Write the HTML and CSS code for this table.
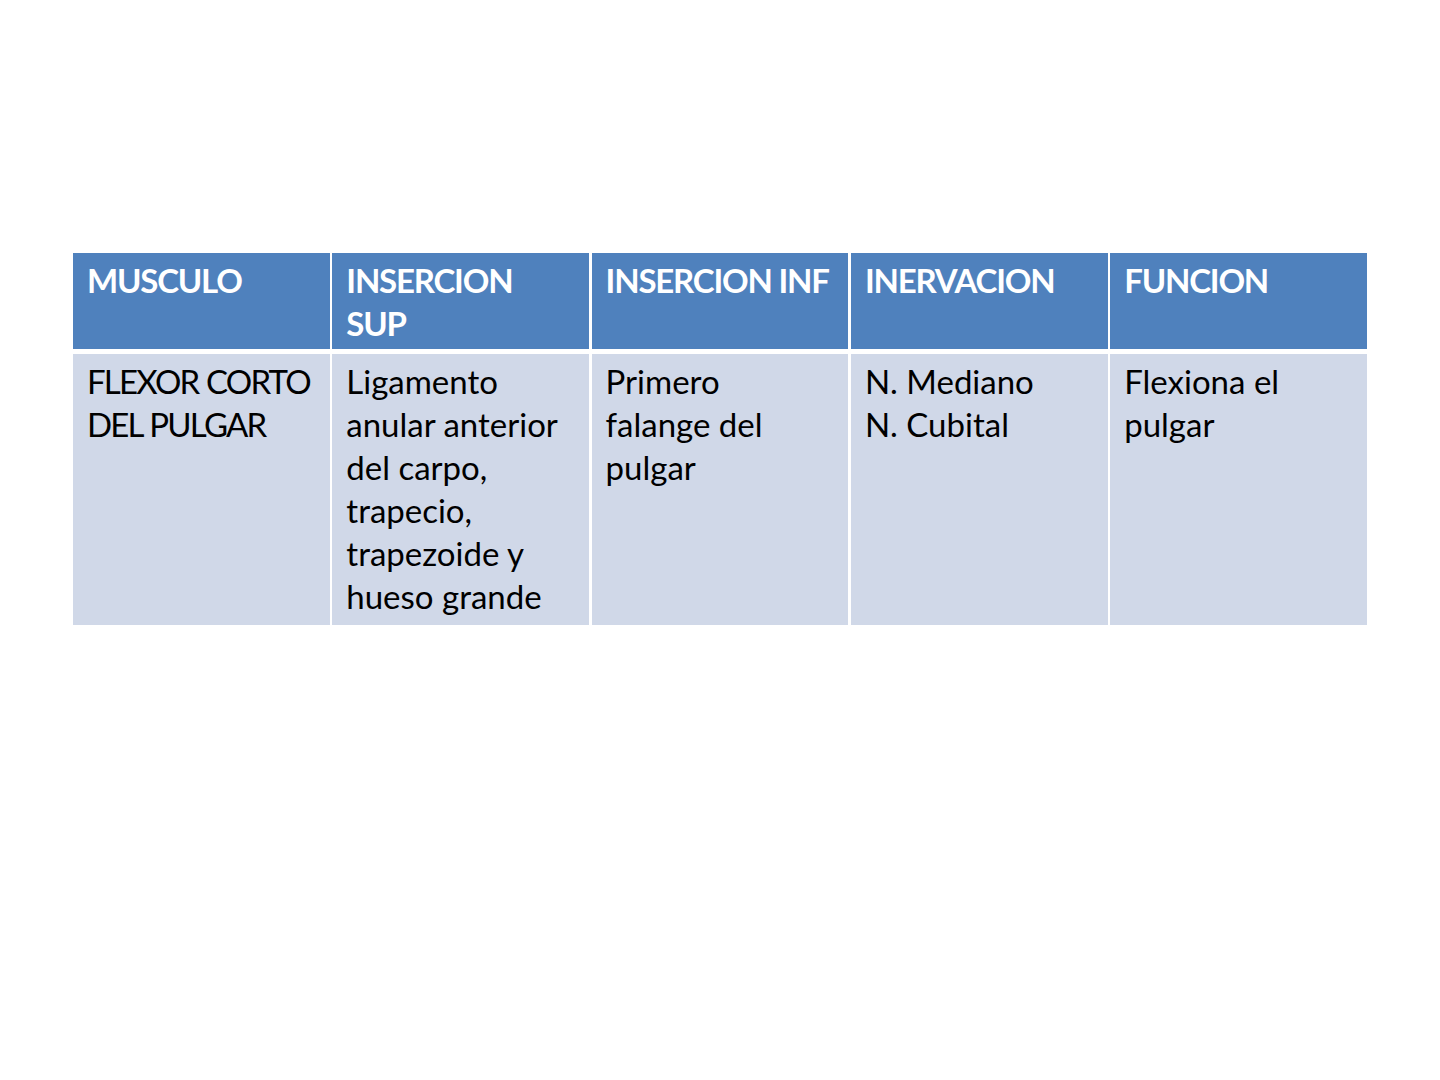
FILE: index.html
```html
<!DOCTYPE html>
<html lang="es">
<head>
<meta charset="utf-8">
<title>Flexor corto del pulgar</title>
<link rel="stylesheet" href="styles.css">
</head>
<body>
<div class="slide">
  <div class="grid">
    <div class="cell head">MUSCULO</div>
    <div class="cell head">INSERCION<br>SUP</div>
    <div class="cell head">INSERCION INF</div>
    <div class="cell head">INERVACION</div>
    <div class="cell head">FUNCION</div>
    <div class="cell body caps">FLEXOR CORTO<br>DEL PULGAR</div>
    <div class="cell body">Ligamento<br>anular anterior<br>del carpo,<br>trapecio,<br>trapezoide y<br>hueso grande</div>
    <div class="cell body">Primero<br>falange del<br>pulgar</div>
    <div class="cell body">N. Mediano<br>N. Cubital</div>
    <div class="cell body">Flexiona el<br>pulgar</div>
  </div>
</div>
</body>
</html>
```
FILE: styles.css
```css
html, body {
  margin: 0;
  padding: 0;
  background: #ffffff;
}
.slide {
  width: 1440px;
  height: 1080px;
  padding-top: 253px;
  padding-left: 73px;
  box-sizing: border-box;
}
.grid {
  width: 1294px;
  display: grid;
  grid-template-columns: repeat(5, minmax(0, 1fr));
  grid-template-rows: 96px 271px;
  column-gap: 2.5px;
  row-gap: 5px;
}
.cell {
  font-family: Lato, "Noto Sans", sans-serif;
  font-size: 33px;
  line-height: 43px;
  padding: 6px 14px 0 14px;
  color: #000000;
  white-space: nowrap;
  overflow: hidden;
}
.head {
  background: #4f81bd;
  color: #ffffff;
  font-weight: 700;
  letter-spacing: -1.2px;
}
.body {
  background: #d0d8e8;
  padding-top: 6px;
}
.caps {
  letter-spacing: -1.8px;
  word-spacing: 1px;
}
```
